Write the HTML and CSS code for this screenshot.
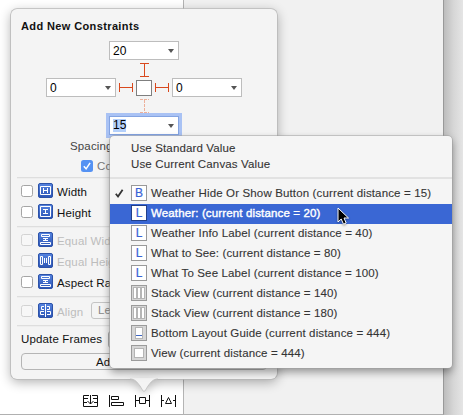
FILE: index.html
```
<!DOCTYPE html>
<html lang="en">
<head>
<meta charset="utf-8">
<title>Add New Constraints</title>
<link rel="stylesheet" href="styles.css">
</head>
<body>
<svg width="0" height="0" class="defs">
  <defs>
    <linearGradient id="blue" x1="0" y1="0" x2="0" y2="1"><stop offset="0" stop-color="#5583df"/><stop offset="1" stop-color="#2c55b5"/></linearGradient>
    <symbol id="tile" viewBox="0 0 15 15"><rect x=".5" y=".5" width="14" height="14" rx="1.5" fill="url(#blue)" stroke="#2d52a8"/></symbol>
    <symbol id="beam" viewBox="0 0 14 9"><path d="M.5 0v9M13.5 0v9M1 4.5h12" fill="none" stroke="currentColor"/></symbol>
    <symbol id="stack" viewBox="0 0 16 16"><rect x=".5" y=".5" width="15" height="15" fill="#d6d6d6" stroke="#9b9b9b"/><rect x="2" y="2" width="12" height="12" fill="#b5b5b5"/><path d="M4 3v10M8 3v10M12 3v10" stroke="#fff" stroke-width="2"/></symbol>
  </defs>
</svg>
<main class="workspace">
  <section class="canvas">
    <div class="tools">
      <svg width="15" height="12" viewBox="0 0 15 12"><path d="M6 .5H.5v11h14V.5H9M1 3.500h4M10 3.500h4M1 7.500h3M11 7.500h3M7.500 0v9M4.500 6l3 3 3-3" fill="none" stroke="#111"/></svg>
      <svg width="15" height="12" viewBox="0 0 15 12"><path d="M.5 0v12M2.500 1.500h7v3h-7zM2.500 7.500h12v3h-12z" fill="none" stroke="#111"/></svg>
      <svg width="15" height="12" viewBox="0 0 15 12"><path d="M.5 0v12M14.500 0v12M1 5.500h3M11 5.500h3M4.500 2.500h6v6h-6z" fill="none" stroke="#111"/></svg>
      <svg width="15" height="12" viewBox="0 0 15 12"><path d="M.5 0v12M14.500 0v12M1 5.500h2M12 5.500h2M7.500 2.500l3 6h-6z" fill="none" stroke="#111"/></svg>
    </div>
  </section>
  <section class="gutter"></section>
  <section class="edge"></section>
</main>

<div class="popover">
  <h1>Add New Constraints</h1>
  <div class="spacing">
    <div class="field">20<i></i></div>
    <svg class="vbeam" width="9" height="14" viewBox="0 0 9 14"><path d="M0 .5h9M0 13.500h9M4.500 1v12" fill="none" stroke="currentColor"/></svg>
    <div class="middle">
      <div class="field">0<i></i></div>
      <svg width="14" height="9"><use href="#beam"/></svg>
      <span class="box"></span>
      <svg width="14" height="9"><use href="#beam"/></svg>
      <div class="field">0<i></i></div>
    </div>
    <svg class="vbeam faint" width="9" height="14" viewBox="0 0 9 14"><path d="M0 .5h9M0 13.500h9M4.500 1v12" fill="none" stroke="currentColor" stroke-dasharray="3 1"/></svg>
    <div class="field focused"><span>15</span><i></i></div>
  </div>
  <p class="caption">Spacing</p>
  <div class="margins">
    <svg width="12" height="12" viewBox="0 0 12 12"><rect width="12" height="12" rx="2.500" fill="#5592f3"/><path d="M2.800 6.200l2.300 2.600 4-6" fill="none" stroke="#fff" stroke-width="1.500"/></svg>
    <span>Con</span>
  </div>
  <div class="group sizes">
    <div class="row"><span class="check"></span><svg width="15" height="15" viewBox="0 0 15 15"><use href="#tile"/><path d="M2.500 3.500h10v8h-10zM5.500 5v5M9.500 5v5M6 7.500h3" fill="none" stroke="#fff"/></svg><span>Width</span></div>
    <div class="row"><span class="check"></span><svg width="15" height="15" viewBox="0 0 15 15"><use href="#tile"/><path d="M2.500 2.500h10v10h-10zM5 5.500h5M5 9.500h5M7.500 6v3" fill="none" stroke="#fff"/></svg><span>Height</span></div>
  </div>
  <div class="group equals">
    <div class="row off"><span class="check"></span><svg width="15" height="15" viewBox="0 0 15 15"><use href="#tile"/><path d="M3.500 2.500h8v2h-8zM2.500 10.500h10v2h-10zM5 6.500h5M5 8.500h5M7.500 6v3" fill="none" stroke="#fff"/></svg><span>Equal Widths</span></div>
    <div class="row off"><span class="check"></span><svg width="15" height="15" viewBox="0 0 15 15"><use href="#tile"/><path d="M2.500 3.500h2v8h-2zM10.500 3.500h2v8h-2zM6.500 5v5M8.500 5v5" fill="none" stroke="#fff"/></svg><span>Equal Heights</span></div>
    <div class="row"><span class="check"></span><svg width="15" height="15" viewBox="0 0 15 15"><use href="#tile"/><path d="M3.500 2.500h8v2h-8zM2.500 10.500h10v2h-10zM5 6.500h5M5 8.500h5M7.500 6v3" fill="none" stroke="#fff"/></svg><span>Aspect Ratio</span></div>
  </div>
  <div class="group align">
    <div class="row off"><span class="check"></span><svg width="15" height="15" viewBox="0 0 15 15"><use href="#tile"/><path d="M7.500 1v13M6 3.500H3.500v3H6M6 8.500H2.500v3H6M9 3.500h2.500v3H9M9 8.500h3.500v3H9" fill="none" stroke="#fff"/></svg><span class="name">Align</span><span class="select">Lea</span></div>
  </div>
  <div class="group update">
    <div class="frames"><span class="name">Update Frames</span><span class="select"></span></div>
    <div class="add">Add</div>
  </div>
  <svg class="tail" width="28" height="15" viewBox="0 0 28 15"><path d="M0 0h28v1C23 1 21 4 18 8c-2 3-3 5.500-4 5.500S12 11 10 8C7 4 5 1 0 1z" fill="#f4f4f4"/><path d="M0 1c5 0 7 3 10 7 2 3 3 5.500 4 5.500S16 11 18 8c3-4 5-7 10-7" fill="none" stroke="#bdbdbd" stroke-width=".8"/></svg>
</div>

<div class="menu">
  <div class="plain">Use Standard Value</div>
  <div class="plain">Use Current Canvas Value</div>
  <hr>
  <div class="item"><span class="tick"><svg width="9" height="9" viewBox="0 0 9 9"><path d="M.8 4.800l2.200 2.700L7.600.8" fill="none" stroke="#333" stroke-width="1.800"/></svg></span><b class="kind">B</b><span>Weather Hide Or Show Button (current distance = 15)</span></div>
  <div class="item selected"><span class="tick"></span><b class="kind">L</b><span>Weather: (current distance = 20)</span></div>
  <div class="item"><span class="tick"></span><b class="kind">L</b><span>Weather Info Label (current distance = 40)</span></div>
  <div class="item"><span class="tick"></span><b class="kind">L</b><span>What to See: (current distance = 80)</span></div>
  <div class="item"><span class="tick"></span><b class="kind">L</b><span>What To See Label (current distance = 100)</span></div>
  <div class="item"><span class="tick"></span><svg width="16" height="16"><use href="#stack"/></svg><span>Stack View (current distance = 140)</span></div>
  <div class="item"><span class="tick"></span><svg width="16" height="16"><use href="#stack"/></svg><span>Stack View (current distance = 180)</span></div>
  <div class="item"><span class="tick"></span><svg width="16" height="16" viewBox="0 0 16 16"><rect x=".5" y=".5" width="15" height="15" fill="#d6d6d6" stroke="#9b9b9b"/><rect x="4.500" y="2.500" width="7" height="11" fill="#fff" stroke="#b5b5b5"/><path d="M5 10.500h6" stroke="#3d66c4"/></svg><span>Bottom Layout Guide (current distance = 444)</span></div>
  <div class="item"><span class="tick"></span><svg width="16" height="16" viewBox="0 0 16 16"><rect x=".5" y=".5" width="15" height="15" fill="#d6d6d6" stroke="#9b9b9b"/><rect x="3.500" y="3.500" width="9" height="9" fill="#fff" stroke="#b5b5b5"/></svg><span>View (current distance = 444)</span></div>
</div>

<svg class="cursor" width="13" height="19" viewBox="0 0 13 19"><path d="M1 1v14l3.200-3 2.300 5.200 2.700-1.200L7 11h4.500z" fill="#000" stroke="#fff" stroke-width="1"/></svg>
</body>
</html>
```
FILE: styles.css
```
* { box-sizing: border-box; }
body {
  margin: 0;
  width: 463px;
  height: 415px;
  overflow: hidden;
  position: relative;
  background: #fff;
  color: #111;
  font: 11.5px/16px "Liberation Sans", Arial, sans-serif;
  letter-spacing: .14px;
  white-space: nowrap;
}
svg { display: block; flex: none; }
.defs { position: absolute; }

.workspace { display: flex; height: 415px; }
.canvas {
  width: 184px;
  border-right: 1px solid #b4b4b4;
  border-bottom: 1px solid #b0b0b0;
  display: flex;
  align-items: flex-end;
}
.tools { display: flex; gap: 11px; padding: 0 0 7px 83px; }
.gutter {
  width: 260px;
  background: #f1f1f1;
  border-right: 1px solid #999;
  border-bottom: 1px solid #b0b0b0;
}
.edge { flex: 1; background: linear-gradient(90deg, #bdbdbd, #d6d6d6 50%, #e5e5e5); }

.popover {
  position: absolute;
  left: 11px;
  top: 9px;
  width: 266px;
  height: 370px;
  padding: 9px 6px 0;
  background: #f4f4f4;
  border-radius: 6px;
  box-shadow: 0 0 0 .8px #b9b9b9, 0 3px 12px rgba(0, 0, 0, .32);
}
.tail { position: absolute; left: 119px; top: 369px; filter: drop-shadow(0 3px 4px rgba(0, 0, 0, .2)); }
h1 { margin: 0 0 7px 4px; font-size: 11px; line-height: 16px; font-weight: bold; letter-spacing: .38px; }

.spacing { display: flex; flex-direction: column; align-items: center; color: #d9481c; }
.middle { display: flex; align-items: center; gap: 3px; }
.vbeam { margin: 3px 0 1px; }
.faint { margin: 2px 0 3px; color: #edb09a; }
.field {
  display: flex;
  align-items: center;
  justify-content: space-between;
  width: 70px;
  height: 19px;
  padding: 0 4px 0 3px;
  background: #fff;
  border: 1px solid #bdbdbd;
  color: #000;
  font-size: 12px;
  letter-spacing: 0;
}
.field i { border: 3.5px solid transparent; border-top: 4px solid #555; border-bottom: 0; }
.focused { border-color: #84a4e2; box-shadow: 0 0 0 3px #a9c2f4; }
.focused span { background: #b4d0fb; line-height: 13px; }
.box { width: 16px; height: 16px; border: 1px solid #7f7f7f; background: #fff; }

.caption { margin: 3px 0 0 53px; height: 16px; color: #444; }
.margins { display: flex; align-items: center; gap: 4px; height: 23px; padding-left: 64px; color: #777; }
.margins span { padding-top: 1px; }
.group { border-top: 1px solid #dedede; box-shadow: inset 0 1px #eee; padding-left: 4px; }
.row { display: flex; align-items: center; gap: 5px; height: 21px; }
.row > svg { margin-right: -1px; }
.row > span:not(.check) { padding-top: 2px; }
.check { width: 12px; height: 12px; border: 1px solid #a5a5a5; border-radius: 2.5px; background: #fff; }
.off { color: #bdbdbd; }
.off .check { border-color: #d3d3d3; background: #f7f7f7; }
.sizes { height: 49px; padding-top: 2px; }
.equals { height: 70px; padding-top: 2px; }
.align { height: 29px; padding-top: 3px; }
.align .name { width: 26px; }
.select { border: 1px solid #c4c4c4; border-radius: 3px; height: 17px; line-height: 15px; width: 160px; padding-left: 6px; }
.row > .select:not(.check) { padding-top: 0; margin-left: 3px; color: #888; }
.frames { display: flex; align-items: center; height: 26px; margin-bottom: 1px; }
.frames .name { width: 87px; }
.frames .select { width: 150px; background: #e9e9e9; border-color: #aaa; }
.add { width: 246px; height: 17px; line-height: 16px; border: 1px solid #b5b5b5; border-radius: 4px; padding-left: 74px; }

.menu {
  position: absolute;
  left: 110px;
  top: 136px;
  width: 342px;
  height: 232px;
  padding-top: 4px;
  background: #f5f5f5;
  border-radius: 4px;
  box-shadow: 0 0 0 .6px #9f9f9f, 0 4px 9px rgba(0, 0, 0, .4);
  color: #343434;
  -webkit-text-stroke: .1px currentColor;
}
.plain { height: 16px; padding-left: 21px; }
.menu hr { height: 2px; margin: 5px 0; border: 0; background: #e2e2e2; }
.item { display: flex; align-items: flex-start; height: 20px; padding-top: 1px; }
.item > span:last-child { margin-left: 4px; line-height: 17px; }
.tick { width: 21px; padding: 4px 0 0 5px; }
.kind { width: 16px; height: 16px; border: 1px solid #999; background: #fff; color: #3863d6; font-weight: normal; font-size: 12px; line-height: 14px; text-align: center; letter-spacing: 0; -webkit-text-stroke: .2px currentColor; }
.selected { background: #3a67d4; color: #fff; -webkit-text-stroke: .4px currentColor; }
.selected .kind { border-color: #223f88; }
.cursor { position: absolute; left: 337px; top: 207px; filter: drop-shadow(0 1px 1px rgba(0, 0, 0, .4)); }
```
